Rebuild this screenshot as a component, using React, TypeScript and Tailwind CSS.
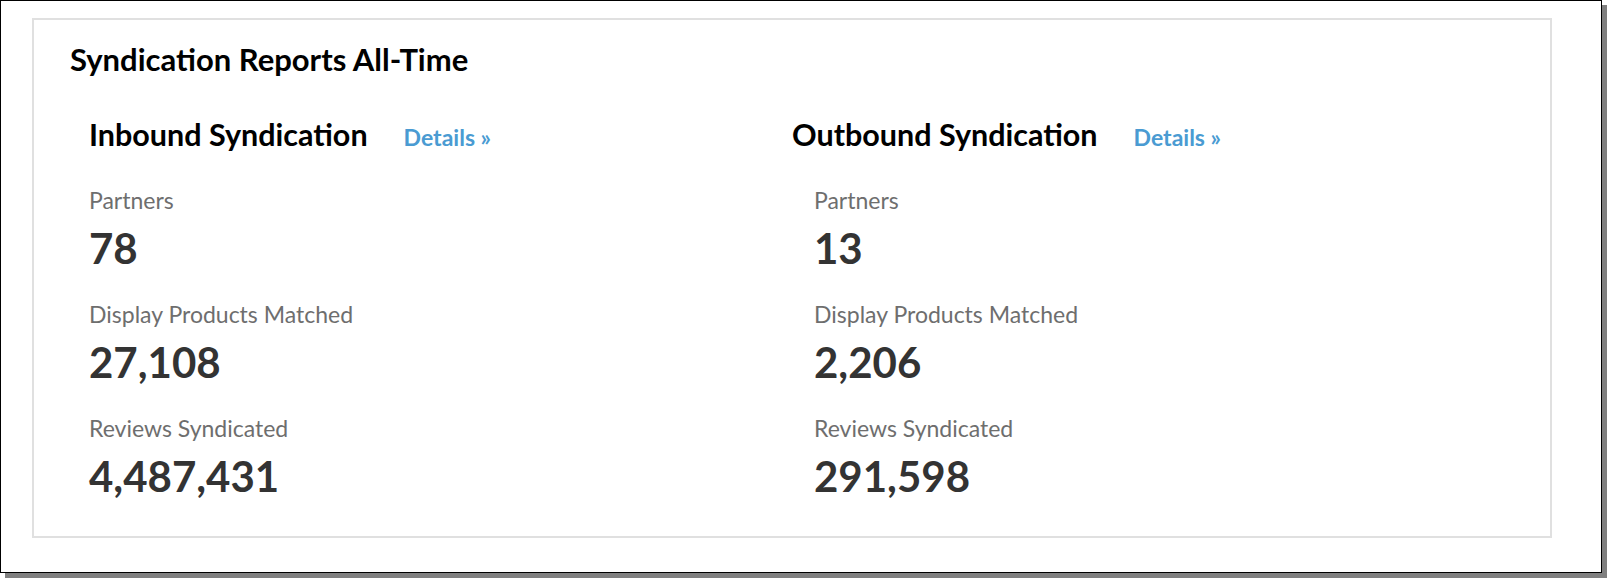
import React from "react";

const font = { fontFamily: "Lato, 'Open Sans', 'Liberation Sans', sans-serif" };

type Stat = { label: string; value: string };

function Column({
  title,
  stats,
  headPad,
  statPad,
}: {
  title: string;
  stats: Stat[];
  headPad: string;
  statPad: string;
}) {
  return (
    <div>
      <div className={`flex items-baseline ${headPad}`}>
        <h2 className="text-[30.5px] leading-none font-bold text-black">{title}</h2>
        <a className="ml-[36px] text-[23px] leading-none font-bold text-[#4a9bd2]">Details »</a>
      </div>
      <div className={`${statPad} mt-[39px] flex flex-col`}>
        {stats.map((s, i) => (
          <div key={s.label} className={i > 0 ? "mt-[34px]" : ""}>
            <div className="text-[23px] leading-none text-[#6e6e6e]">{s.label}</div>
            <div className="mt-[15px] text-[42px] leading-none font-bold text-[#333333]">{s.value}</div>
          </div>
        ))}
      </div>
    </div>
  );
}

export default function App() {
  return (
    <div className="w-[1607px] h-[578px] bg-white" style={font}>
      <div className="w-[1602px] h-[573px] border border-black bg-white shadow-[5px_5px_0_0_#808080] pt-[17px] pl-[31px]">
        <div className="w-[1520px] h-[520px] border-2 border-[#e0e0e0] pl-[36px] pt-[24px]">
          <h1 className="text-[31px] leading-none font-bold text-black">Syndication Reports All-Time</h1>
          <div className="mt-[44px] grid grid-cols-[721px_1fr]">
            <Column
              title="Inbound Syndication"
              headPad="pl-[19px]"
              statPad="pl-[19px]"
              stats={[
                { label: "Partners", value: "78" },
                { label: "Display Products Matched", value: "27,108" },
                { label: "Reviews Syndicated", value: "4,487,431" },
              ]}
            />
            <Column
              title="Outbound Syndication"
              headPad="pl-[1px]"
              statPad="pl-[23px]"
              stats={[
                { label: "Partners", value: "13" },
                { label: "Display Products Matched", value: "2,206" },
                { label: "Reviews Syndicated", value: "291,598" },
              ]}
            />
          </div>
        </div>
      </div>
    </div>
  );
}
